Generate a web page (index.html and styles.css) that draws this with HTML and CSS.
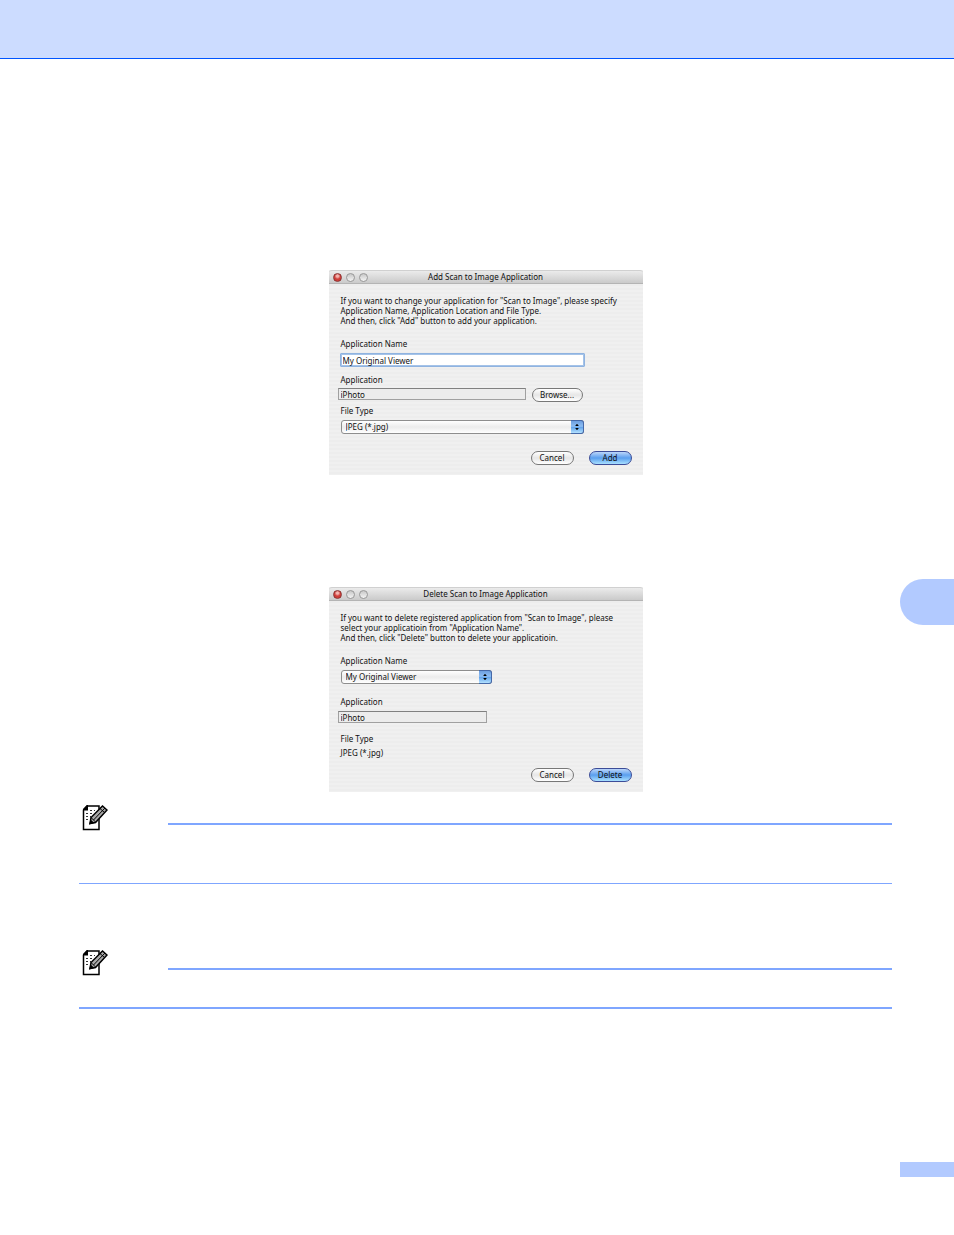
FILE: index.html
```html
<!DOCTYPE html>
<html lang="en">
<head>
    <meta charset="UTF-8">
    <meta name="viewport" content="width=device-width, initial-scale=1.0">
    <title>Scan to Image Application</title>
    <link rel="stylesheet" href="styles.css">
</head>
<body>
    <header class="top-band"></header>

    <main class="content">
        <form class="dialog" aria-labelledby="addTitle">
            <div class="title-bar">
                <div class="lights">
                    <span class="light close"></span>
                    <span class="light"></span>
                    <span class="light"></span>
                </div>
                <div class="title" id="addTitle">Add Scan to Image Application</div>
            </div>
            <div class="dialog-body">
                <p class="message">If you want to change your application for "Scan to Image", please specify<br>
                Application Name, Application Location and File Type.<br>
                And then, click "Add" button to add your application.</p>

                <label class="label" for="addName">Application Name</label>
                <input class="text-input" id="addName" type="text" value="My Original Viewer" autofocus>

                <label class="label near" for="addApp">Application</label>
                <div class="browse-row">
                    <input class="path-box" id="addApp" type="text" value="iPhoto" readonly>
                    <button class="button browse" type="button">Browse...</button>
                </div>

                <label class="label tight" for="addType">File Type</label>
                <div class="select-wrap">
                    <select class="select" id="addType">
                        <option>JPEG (*.jpg)</option>
                    </select>
                    <svg class="arrows" viewBox="0 0 12 13" aria-hidden="true">
                        <path d="M4 5.500 6 3l2 2.500z M4 7.500h4L6 10z"/>
                    </svg>
                </div>

                <div class="actions">
                    <button class="button" type="button">Cancel</button>
                    <button class="button primary" type="button">Add</button>
                </div>
            </div>
        </form>

        <form class="dialog" aria-labelledby="deleteTitle">
            <div class="title-bar">
                <div class="lights">
                    <span class="light close"></span>
                    <span class="light"></span>
                    <span class="light"></span>
                </div>
                <div class="title" id="deleteTitle">Delete Scan to Image Application</div>
            </div>
            <div class="dialog-body">
                <p class="message">If you want to delete registered application from "Scan to Image", please<br>
                select your applicatioin from "Application Name".<br>
                And then, click "Delete" button to delete your applicatioin.</p>

                <label class="label" for="deleteName">Application Name</label>
                <div class="select-wrap short">
                    <select class="select" id="deleteName">
                        <option>My Original Viewer</option>
                    </select>
                    <svg class="arrows" viewBox="0 0 12 13" aria-hidden="true">
                        <path d="M4 5.500 6 3l2 2.500z M4 7.500h4L6 10z"/>
                    </svg>
                </div>

                <label class="label" for="deleteApp">Application</label>
                <input class="path-box short" id="deleteApp" type="text" value="iPhoto" readonly>

                <div class="label type">File Type</div>
                <div class="value">JPEG (*.jpg)</div>

                <div class="actions close-up">
                    <button class="button" type="button">Cancel</button>
                    <button class="button primary" type="button">Delete</button>
                </div>
            </div>
        </form>

        <section class="note">
            <svg class="note-icon" viewBox="0 0 26 26" aria-hidden="true">
                <path d="M5 1h12v23.500H1.500V5z" fill="#fff" stroke="#000" stroke-width="1.500"/>
                <path d="M1 5.500V4l4-4h1v5.500z" fill="#000"/>
                <path d="M4 8.500h6M4 11.500h5M4 14.500h3M8 5.500h5" stroke="#333" stroke-dasharray="2 2"/>
                <path d="M8 18.500 9 12.500 20.500 1l4.500 4-11.500 12.500z" fill="#aaa" stroke="#000" stroke-width="1.500"/>
                <path d="M11.500 15 23 3M9 12.500l4.500 4.500M18 3.500l4.500 4" fill="none" stroke="#000"/>
                <path d="M7 19.500 8.500 14.500l4 3.500z" fill="#000"/>
            </svg>
            <hr class="rule">
        </section>

        <section class="note second">
            <svg class="note-icon" viewBox="0 0 26 26" aria-hidden="true">
                <path d="M5 1h12v23.500H1.500V5z" fill="#fff" stroke="#000" stroke-width="1.500"/>
                <path d="M1 5.500V4l4-4h1v5.500z" fill="#000"/>
                <path d="M4 8.500h6M4 11.500h5M4 14.500h3M8 5.500h5" stroke="#333" stroke-dasharray="2 2"/>
                <path d="M8 18.500 9 12.500 20.500 1l4.500 4-11.500 12.500z" fill="#aaa" stroke="#000" stroke-width="1.500"/>
                <path d="M11.500 15 23 3M9 12.500l4.500 4.500M18 3.500l4.500 4" fill="none" stroke="#000"/>
                <path d="M7 19.500 8.500 14.500l4 3.500z" fill="#000"/>
            </svg>
            <hr class="rule">
        </section>
    </main>

    <div class="chapter-tab"></div>
    <footer class="page-footer">
        <div class="page-mark"></div>
    </footer>
</body>
</html>
```

FILE: styles.css
```css
* {
    box-sizing: border-box;
}

body {
    position: relative;
    display: flex;
    flex-direction: column;
    min-height: 100vh;
    margin: 0;
    background-color: #fff;
    color: #111;
    font-family: "Noto Sans", sans-serif;
    font-size: 8px;
    line-height: 10px;
}

.top-band {
    height: 59px;
    background-color: #ccdcff;
    border-bottom: 1px solid #0055ff;
}

.content {
    flex-grow: 1;
    display: flex;
    flex-direction: column;
    align-items: center;
    padding: 211px 62px 0 79px;
}

/* Dialogs */
.dialog {
    width: 314px;
    background: repeating-linear-gradient(#f0f0f0 0 2px, #ededed 2px 4px);
}

.dialog + .dialog {
    margin-top: 112px;
}

.title-bar {
    display: grid;
    grid-template-columns: 40px 1fr 40px;
    align-items: center;
    height: 14px;
    background: linear-gradient(#ebebeb, #cacaca);
    border-top: 1px solid #d0d0d0;
    border-bottom: 1px solid #b4b4b4;
    border-radius: 3px 3px 0 0;
}

.title {
    text-align: center;
}

.lights {
    display: flex;
    gap: 4px;
    padding-left: 4px;
}

.light {
    width: 9px;
    height: 9px;
    border: 1px solid #989898;
    border-radius: 50%;
    background: linear-gradient(#c8c8c8, #f4f4f4);
}

.light.close {
    border-color: #8a3433;
    background: radial-gradient(circle at 50% 30%, #f3b5b0 0 1px, #cf3c38 3px);
}

.dialog-body {
    display: flex;
    flex-direction: column;
    align-items: flex-start;
    padding: 12px 11px 10px 12px;
}

.message {
    margin: 0;
    white-space: nowrap;
}

.label {
    margin-top: 13px;
    margin-bottom: 4px;
}

.label.near {
    margin-top: 8px;
    margin-bottom: 3px;
}

.label.tight {
    margin-top: 4px;
}

.label.type {
    margin-top: 11px;
}

.text-input,
.path-box,
.select,
.button {
    color: #111;
    font: inherit;
    outline: none;
}

.text-input {
    width: 245px;
    height: 14px;
    margin-left: -1px;
    padding: 0 2px;
    background-color: #fff;
    border: 1px solid #8fb3e0;
    border-radius: 1px;
    box-shadow: inset 0 0 0 1px #a5c3e8;
}

.browse-row {
    display: flex;
    gap: 6px;
    width: 245px;
    margin-left: -3px;
}

.path-box {
    flex: none;
    width: 188px;
    height: 12px;
    padding: 0 2px;
    background-color: #ececec;
    border: 1px solid #a0a0a0;
    border-top-color: #808080;
}

.path-box.short {
    width: 149px;
    margin-left: -3px;
}

.select-wrap {
    position: relative;
    width: 243px;
    height: 14px;
}

.select-wrap.short {
    width: 151px;
}

.select {
    appearance: none;
    display: block;
    width: 100%;
    height: 100%;
    padding: 0 16px 0 4px;
    background: linear-gradient(#fff, #ececec 50%, #fff);
    border: 1px solid #8e8e8e;
    border-radius: 3px;
}

.arrows {
    position: absolute;
    top: 0;
    right: 0;
    width: 13px;
    height: 14px;
    background: linear-gradient(#6d9fe0, #8dbdf3 45%, #5ea0ea 50%, #b4e2ff);
    border: 1px solid #4669a8;
    border-left: none;
    border-radius: 0 3px 3px 0;
    pointer-events: none;
}

.actions {
    display: flex;
    align-self: flex-end;
    gap: 15px;
    margin-top: 17px;
}

.actions.close-up {
    margin-top: 10px;
}

.button {
    width: 43px;
    height: 14px;
    padding: 0;
    background: linear-gradient(#fff, #e6e6e6 50%, #fff);
    border: 1px solid #777;
    border-radius: 7px;
}

.button.browse {
    width: 52px;
}

.button.primary {
    background: linear-gradient(#bcd6fa, #5a9eee 50%, #a8e0ff);
    border-color: #3c4c98;
}

/* Notes */
.note {
    display: flex;
    align-items: flex-start;
    align-self: stretch;
    gap: 60px;
    height: 79px;
    margin-top: 13px;
    padding-left: 3px;
    border-bottom: 1px solid #7fa6ff;
}

.note.second {
    height: 59px;
    margin-top: 66px;
    border-bottom-width: 2px;
}

.note-icon {
    flex: none;
    width: 26px;
    height: 26px;
}

.rule {
    flex-grow: 1;
    height: 2px;
    margin: 18px 0 0;
    background-color: #7fa6ff;
    border: none;
}

/* Chapter tab sits over the right page edge */
.chapter-tab {
    position: absolute;
    top: 579px;
    right: 0;
    width: 54px;
    height: 46px;
    background-color: #b2caff;
    border-radius: 23px 0 0 23px;
}

.page-footer {
    display: flex;
    justify-content: flex-end;
    padding-bottom: 58px;
}

.page-mark {
    width: 54px;
    height: 15px;
    background-color: #b2caff;
}
```
